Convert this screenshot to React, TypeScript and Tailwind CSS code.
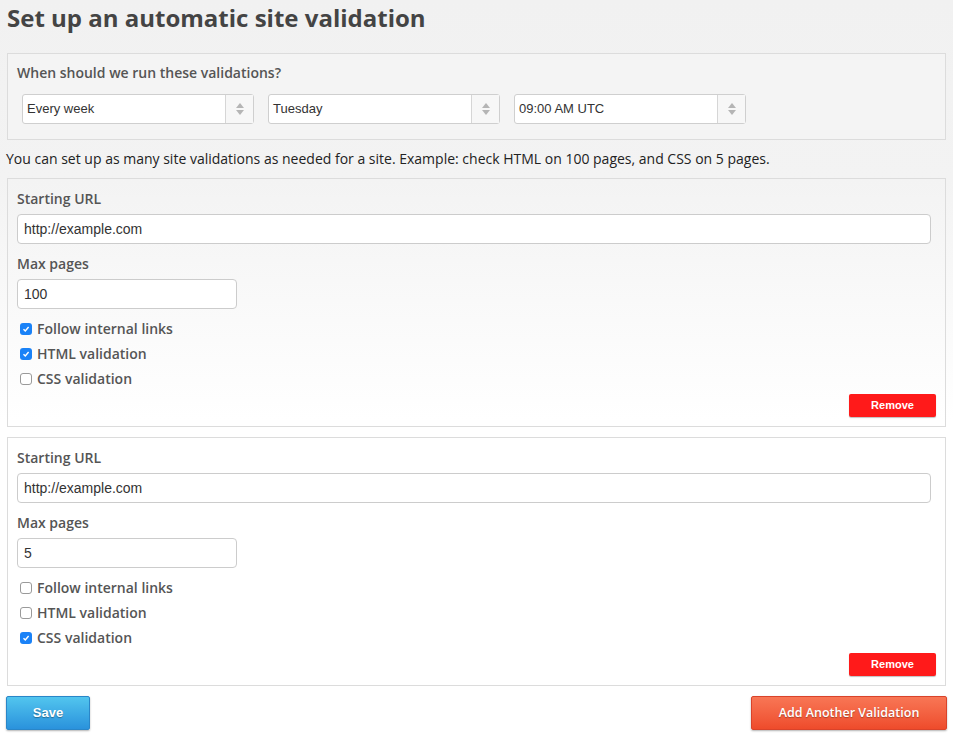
import React from "react"

const openSans = "font-['Open_Sans',sans-serif]"
const helv = "font-['Liberation_Sans',Arial,sans-serif]"

function Select({ value }: { value: string }) {
  return (
    <div className="flex h-[30px] w-[232px] rounded-[3px] border border-[#cfcfcf] bg-white">
      <div className={`flex flex-1 items-center pl-[4px] text-[13px] text-[#333] ${helv}`}>{value}</div>
      <div className="flex w-[28px] flex-col items-center justify-center gap-[2px] border-l border-[#d6d6d6] bg-[#f7f7f7]">
        <svg width="8" height="5" viewBox="0 0 8 5"><path d="M4 0L8 5H0z" fill="#b5b5b5" /></svg>
        <svg width="8" height="5" viewBox="0 0 8 5"><path d="M0 0H8L4 5z" fill="#b5b5b5" /></svg>
      </div>
    </div>
  )
}

function TextInput({ value, className }: { value: string; className: string }) {
  return (
    <div className={`flex h-[30px] items-center rounded-[4px] border border-[#cccccc] bg-white px-[6px] text-[14px] text-[#333] ${helv} ${className}`}>
      {value}
    </div>
  )
}

function Check({ checked, label }: { checked: boolean; label: string }) {
  return (
    <div className="flex h-[25px] items-center gap-[5px] pl-[3px]">
      {checked ? (
        <span className="flex h-[12px] w-[12px] items-center justify-center rounded-[3px] bg-[#1a82f7]">
          <svg width="8" height="8" viewBox="0 0 8 8"><path d="M1.5 4.2L3.3 6L6.6 2" stroke="white" strokeWidth="1.4" fill="none" /></svg>
        </span>
      ) : (
        <span className="h-[12px] w-[12px] rounded-[3px] border border-[#9a9a9a] bg-white" />
      )}
      <span className={`text-[14px] font-semibold text-[#555] ${openSans}`}>{label}</span>
    </div>
  )
}

function ValidationPanel({ pages, follow, html, css }: { pages: string; follow: boolean; html: boolean; css: boolean }) {
  return (
    <div className="mx-[1px] flex h-[249px] flex-col border border-[#dcdcdc] pl-[9px] pr-[14px] pt-[8px]">
      <div className={`text-[14px] font-semibold leading-[24px] text-[#555] ${openSans}`}>Starting URL</div>
      <TextInput value="http://example.com" className="mt-[3px] w-full" />
      <div className={`mt-[8px] text-[14px] font-semibold leading-[24px] text-[#555] ${openSans}`}>Max pages</div>
      <TextInput value={pages} className="mt-[3px] w-[220px]" />
      <div className="mt-[7px] flex flex-col">
        <Check checked={follow} label="Follow internal links" />
        <Check checked={html} label="HTML validation" />
        <Check checked={css} label="CSS validation" />
      </div>
      <div className="-mr-[5px] mt-[3px] flex justify-end">
        <button className={`h-[23px] w-[87px] rounded-[2px] bg-[#ff1a1a] text-[11px] font-bold text-white shadow-[0_1px_1px_rgba(0,0,0,0.25)] ${helv}`}>
          Remove
        </button>
      </div>
    </div>
  )
}

export default function App() {
  return (
    <div className="min-h-[736px] bg-[linear-gradient(to_bottom,#f1f1f1_0px,#f3f3f3_180px,#ffffff_420px)] px-[6px]">
      <h1 className={`pl-[1px] pt-[1px] text-[24px] font-bold leading-[34px] text-[#444] ${openSans}`}>
        Set up an automatic site validation
      </h1>
      <div className="mx-[1px] mt-[18px] flex h-[87px] flex-col border border-[#dcdcdc] bg-[#f4f4f4] pl-[9px] pt-[9px]">
        <div className={`text-[14px] font-semibold leading-[20px] text-[#555] ${openSans}`}>When should we run these validations?</div>
        <div className="ml-[5px] mt-[11px] flex gap-[14px]">
          <Select value="Every week" />
          <Select value="Tuesday" />
          <Select value="09:00 AM UTC" />
        </div>
      </div>
      <p className={`pt-[8px] text-[14px] leading-[22px] text-[#222] ${openSans}`}>
        You can set up as many site validations as needed for a site. Example: check HTML on 100 pages, and CSS on 5 pages.
      </p>
      <div className="mt-[8px] flex flex-col gap-[10px]">
        <ValidationPanel pages="100" follow html css={false} />
        <ValidationPanel pages="5" follow={false} html={false} css />
      </div>
      <div className="mt-[10px] flex justify-between">
        <button className={`h-[34px] w-[84px] rounded-[2px] border border-[#2a86c8] bg-linear-to-b from-[#52c5ee] to-[#2a92dc] text-[13px] font-bold text-white [text-shadow:0_1px_1px_rgba(0,0,0,0.35)] shadow-[0_1px_2px_rgba(0,0,0,0.3)] ${helv}`}>
          Save
        </button>
        <button className={`h-[34px] w-[196px] rounded-[2px] border border-[#d9432a] bg-linear-to-b from-[#f87655] to-[#ee4b2b] text-[12.5px] font-semibold text-white [text-shadow:0_1px_1px_rgba(0,0,0,0.3)] shadow-[0_1px_2px_rgba(0,0,0,0.3)] ${openSans}`}>
          Add Another Validation
        </button>
      </div>
    </div>
  )
}
